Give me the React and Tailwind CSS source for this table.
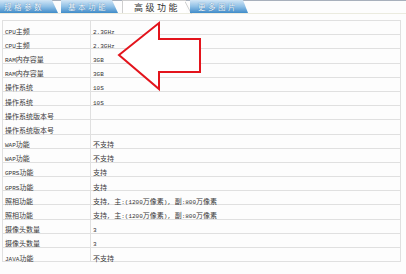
/**
 * 参数页 - 高级功能 tab
 */

import React from 'react';

const rows = [
  ['CPU主频', '2.3GHz'],
  ['CPU主频', '2.3GHz'],
  ['RAM内存容量', '3GB'],
  ['RAM内存容量', '3GB'],
  ['操作系统', '10S'],
  ['操作系统', '10S'],
  ['操作系统版本号', ''],
  ['操作系统版本号', ''],
  ['WAP功能', '不支持'],
  ['WAP功能', '不支持'],
  ['GPRS功能', '支持'],
  ['GPRS功能', '支持'],
  ['照相功能', '支持, 主:(1200万像素), 副:800万像素'],
  ['照相功能', '支持, 主:(1200万像素), 副:800万像素'],
  ['摄像头数量', '3'],
  ['摄像头数量', '3'],
  ['JAVA功能', '不支持'],
];

// latin runs get a half-width mono font, CJK runs stay full width
const Mixed = ({ text }) => (
  <span className="leading-none">
    {text.split(/([\u3000-\u9fff\uff00-\uffef]+)/).filter(Boolean).map((part, i) =>
      /[\u3000-\u9fff\uff00-\uffef]/.test(part) ? (
        <span key={i} className="text-[7px] font-['Noto_Sans_CJK_SC',sans-serif]">{part}</span>
      ) : (
        <span key={i} className="text-[6px] text-[#333] font-['Liberation_Mono',monospace]">{part}</span>
      )
    )}
  </span>
);

const Tab = ({ label, width, slant, textPad }) => (
  <div
    className="h-[13px] flex items-center bg-gradient-to-b from-[#d3e6f5] via-[#8fc0e6] to-[#3f8cc9]"
    style={{ width, clipPath: `polygon(0 0, ${width - slant}px 0, 100% 100%, 0 100%)` }}
  >
    <span
      className="text-[7.5px] leading-none tracking-[2.5px] text-[#f4f8fc] font-['Noto_Sans_CJK_SC',sans-serif] [text-shadow:0_0_1px_#2c6a9e]"
      style={{ paddingLeft: textPad }}
    >
      {label}
    </span>
  </div>
);

export default function App() {
  return (
    <div className="w-[406px] h-[274px] bg-[#fdfdfd] relative overflow-hidden">
      {/* tab bar */}
      <div className="h-px bg-[#a8b0bc]" />
      <div className="flex items-end h-[13px] border-b border-[#ebebdf]">
        <Tab label="规格参数" width={58} slant={6} textPad={4} />
        <div className="w-[3px]" />
        <Tab label="基本功能" width={57} slant={6} textPad={7} />
        <div className="w-[4px]" />
        <div className="w-[64px] h-[13px] bg-white border-l border-t border-[#cfcfcf] flex items-center relative">
          <span className="pl-[11px] text-[9px] leading-none tracking-[2.5px] text-[#333] font-['Noto_Sans_CJK_SC',sans-serif]">
            高级功能
          </span>
          <svg className="absolute -right-[6px] top-0" width="7" height="13" viewBox="0 0 7 13">
            <path d="M0 0.5 L6.5 13" stroke="#cfcfcf" strokeWidth="1" fill="none" />
          </svg>
        </div>
        <div className="w-[4px]" />
        <Tab label="更多图片" width={58} slant={5} textPad={8} />
      </div>

      {/* spec table */}
      <div className="mt-[6px] ml-[2px] w-[399px] border-l border-r border-b border-[#e0e0e0]">
        {rows.map(([k, v], i) => (
          <div key={i} className="flex h-[14.2px] border-t border-[#e0e0e0] text-[#3a3a3a]">
            <div className="w-[88px] shrink-0 border-r border-[#e0e0e0] flex items-center pl-[2px] whitespace-nowrap">
              <Mixed text={k} />
            </div>
            <div className="flex-1 flex items-center pl-[2px] whitespace-nowrap">
              <Mixed text={v} />
            </div>
          </div>
        ))}
      </div>

      {/* red arrow overlay */}
      <svg className="absolute left-0 top-0 pointer-events-none" width="406" height="274" viewBox="0 0 406 274">
        <polygon
          points="119,55 159,23 159,39 200,39 200,72 159,72 159,89"
          fill="white"
          stroke="#e3141c"
          strokeWidth="2"
          strokeLinejoin="miter"
        />
      </svg>
    </div>
  );
}
